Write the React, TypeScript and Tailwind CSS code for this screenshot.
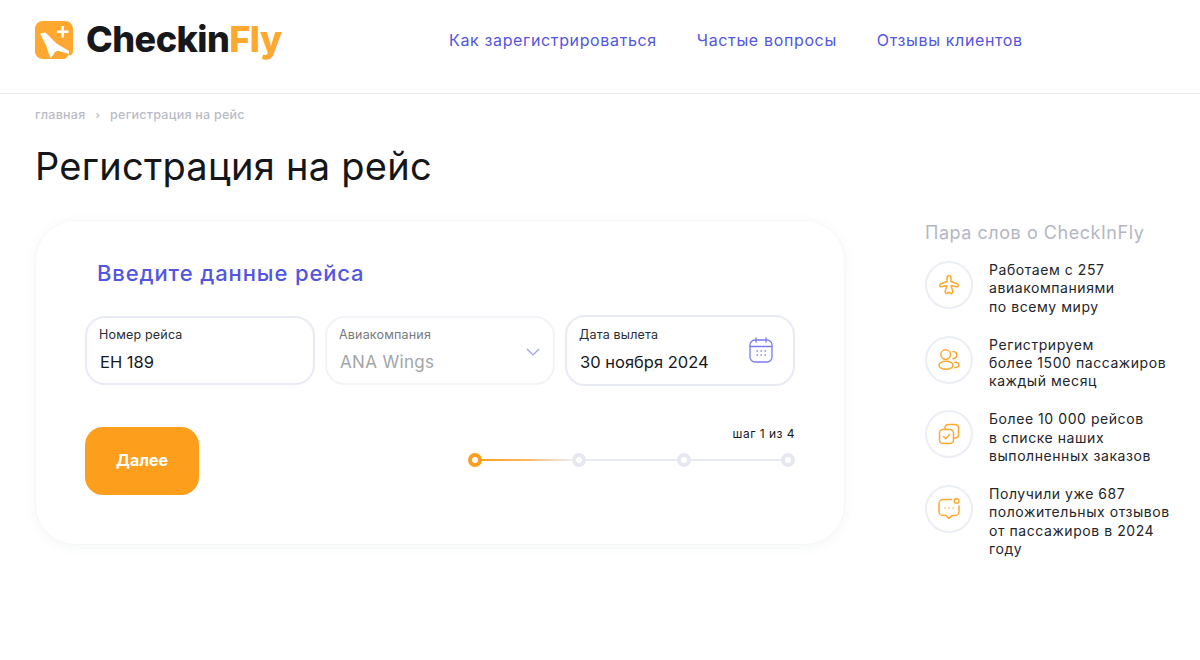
const font = "font-['Inter','Noto_Sans',sans-serif]";

function LogoMark() {
  return (
    <svg width="38" height="38" viewBox="0 0 38 38" className="shrink-0">
      <path d="M8 0H30C34.500 0 38 3.500 38 8V30C38 32 37 33.500 36 34L33 34.500L31 37.500L29 38H8C3.500 38 0 34.500 0 30V8C0 3.500 3.500 0 8 0Z" fill="#fea82f" />
      <path d="M5 12.500L10.500 11.500L21.500 22.500L34 30L34 33L23 29.700L19.700 31.300L16.500 36.500H15L11.300 25Z" fill="#fff" />
      <path d="M26.500 5H29V9.500H33.500V12H29V16.500H26.500V12H22V9.500H26.500Z" fill="#fff" />
    </svg>
  );
}

function PlaneIcon() {
  return (
    <svg width="22" height="22" viewBox="0 0 22 22" fill="none" stroke="#fea82f" strokeWidth="1.500" strokeLinejoin="round">
      <path d="M11 1.500C12.400 1.500 13 3 13 4.500V7.500L19 9.700C20.600 10.300 20.800 13 19 12.800L13 11.800L14.500 16C15.500 18.600 14 20 12.500 19.300L11 18.200L9.500 19.300C8 20 6.500 18.600 7.500 16L9 11.800L3 12.800C1.200 13 1.400 10.300 3 9.700L9 7.500V4.500C9 3 9.600 1.500 11 1.500Z" />
    </svg>
  );
}

function UsersIcon() {
  return (
    <svg width="22" height="22" viewBox="0 0 22 22" fill="none" stroke="#fea82f" strokeWidth="1.500" strokeLinecap="round">
      <circle cx="7.700" cy="5.600" r="4.800" />
      <ellipse cx="8" cy="16.300" rx="7" ry="4" />
      <path d="M15 2.500C17.500 2.800 18.800 4.500 18.800 6C18.800 7.500 17.500 9.300 15 9.700" />
      <path d="M16.800 13.300C19.800 13.500 21 14.800 21 16C21 17.200 19.800 18.400 16.800 18.700" />
    </svg>
  );
}

function ChecksIcon() {
  return (
    <svg width="22" height="22" viewBox="0 0 22 22" fill="none" stroke="#fea82f" strokeWidth="1.500" strokeLinecap="round" strokeLinejoin="round">
      <path d="M7 6.500V5C7 2.800 8.300 1.500 10.500 1.500H17C19.200 1.500 20.500 2.800 20.500 5V11.500C20.500 13.700 19.200 15 17 15H15.500" />
      <rect x="1.500" y="6.500" width="14" height="14" rx="3.500" />
      <path d="M5.500 13.500L7.700 15.700L11.500 11.500" />
    </svg>
  );
}

function ChatIcon() {
  return (
    <svg width="22" height="22" viewBox="0 0 22 22" fill="none" stroke="#fea82f" strokeWidth="1.500" strokeLinecap="round" strokeLinejoin="round">
      <path d="M13.500 1.500H5C2.800 1.500 1 3.300 1 5.500V13.500C1 15.700 2.800 17.500 5 17.500H8L11 20.500L14 17.500H17C19.200 17.500 21 15.700 21 13.500V8" />
      <circle cx="18.500" cy="3" r="2.300" />
      <path d="M7 10H7.010M11 10H11.010M15 10H15.010" />
    </svg>
  );
}

function CalendarIcon() {
  return (
    <svg width="24" height="26" viewBox="0 0 24 26" fill="none" stroke="#7b7bf0" strokeWidth="1.300" strokeLinecap="round">
      <rect x="1" y="3" width="22" height="22" rx="5" />
      <path d="M1 9.500H23M7 1V5M17 1V5" />
      <path d="M8 14H8.500M12 14H12.500M16 14H16.500M8 18H8.500M12 18H12.500M16 18H16.500" />
    </svg>
  );
}

function Field({ label, value, muted, size = 'h-[69px]', children }: any) {
  return (
    <div className={`relative flex-1 ${size} rounded-[20px] border-2 pl-[12px] pb-[2px] flex flex-col justify-center ${muted ? 'border-[#f3f4f8]' : 'border-[#e9ebf4]'}`}>
      <div className={`text-[12.500px] leading-[18px] tracking-[0.015em] ${muted ? 'text-[#777a80]' : 'text-[#2a2c33]'}`}>{label}</div>
      <div className={`mt-[7px] ml-[1px] leading-[22px] ${muted ? 'text-[17px] tracking-[0.02em] text-[#a3a5aa]' : 'text-[16.500px] text-[#17181c]'}`}>{value}</div>
      {children}
    </div>
  );
}

function Step({ active }: any) {
  return active ? (
    <div className="w-[14px] h-[14px] rounded-full border-[4px] border-[#fd9f1c] bg-white shrink-0" />
  ) : (
    <div className="w-[14px] h-[14px] rounded-full border-[4px] border-[#e6e8f1] bg-white shrink-0" />
  );
}

const facts = [
  { icon: <PlaneIcon />, lines: ['Работаем с 257', 'авиакомпаниями', 'по всему миру'] },
  { icon: <UsersIcon />, lines: ['Регистрируем', 'более 1500 пассажиров', 'каждый месяц'] },
  { icon: <ChecksIcon />, lines: ['Более 10 000 рейсов', 'в списке наших', 'выполненных заказов'] },
  { icon: <ChatIcon />, lines: ['Получили уже 687', 'положительных отзывов', 'от пассажиров в 2024', 'году'] },
];

export default function App() {
  return (
    <div className={`min-h-[660px] bg-white text-[#17181c] overflow-hidden ${font}`}>
      {/* Header */}
      <header className="h-[94px] border-b border-[#e9ebf2] flex items-start pl-[35px] pt-[21px]">
        <LogoMark />
        <div className="ml-[13px] w-[197px] text-[36px] leading-[36px] font-extrabold tracking-[-0.015em] whitespace-nowrap">
          Checkin<span className="text-[#fea82f]">Fly</span>
        </div>
        <nav className="ml-[166px] pt-[8px] flex gap-[40px] text-[16px] leading-[22px] tracking-[0.04em] text-[#5356e0] whitespace-nowrap">
          <a>Как зарегистрироваться</a>
          <a>Частые вопросы</a>
          <a>Отзывы клиентов</a>
        </nav>
      </header>

      <main className="px-[35px]">
        <div className="pt-[13px] flex items-center text-[12.500px] leading-[16px] tracking-[0.02em] font-medium text-[#b9bcc6]">
          <span>главная</span>
          <span className="mx-[10px] text-[11px]">›</span>
          <span>регистрация на рейс</span>
        </div>
        <h1 className="mt-[20px] text-[38px] leading-[46px] tracking-[0.007em] font-normal text-[#15161a]">Регистрация на рейс</h1>

        <div className="mt-[31px] flex items-start">
          {/* Flight form */}
          <section className="w-[810px] h-[325px] shrink-0 rounded-[40px] bg-white border border-[#f6f7f9] shadow-[0_2px_12px_rgba(60,70,110,0.05)] px-[49px] pt-[38px]">
            <h2 className="ml-[12px] text-[22px] leading-[28px] tracking-[0.04em] font-medium text-[#5356e0]">Введите данные рейса</h2>
            <div className="mt-[28px] h-[71px] flex items-center gap-[10px]">
              <Field label="Номер рейса" value="EH 189" />
              <Field label="Авиакомпания" value="ANA Wings" muted>
                <svg width="14" height="8" viewBox="0 0 14 8" fill="none" stroke="#9a9df0" strokeWidth="1.200" className="absolute right-[13px] top-[30px]">
                  <path d="M1 1L7 7L13 1" />
                </svg>
              </Field>
              <Field label="Дата вылета" value="30 ноября 2024" size="h-[71px]">
                <div className="absolute right-[20px] top-[20px]">
                  <CalendarIcon />
                </div>
              </Field>
            </div>

            <div className="mt-[41px] flex items-start justify-between">
              <button className="w-[114px] h-[68px] pb-[2px] rounded-[18px] bg-[#fd9f1c] text-white text-[16px] font-bold">Далее</button>
              <div className="w-[327px]">
                <div className="text-right text-[12px] leading-[14px] tracking-[0.04em] text-[#17181c]">шаг 1 из 4</div>
                <div className="mt-[12px] flex items-center">
                  <Step active />
                  <div className="flex-1 h-[2px] bg-gradient-to-r from-[#fd9f1c] via-[#fdb95c] to-[#e9ebf4]" />
                  <Step />
                  <div className="flex-1 h-[2px] bg-[#e9ebf4]" />
                  <Step />
                  <div className="flex-1 h-[2px] bg-[#e9ebf4]" />
                  <Step />
                </div>
              </div>
            </div>
          </section>

          {/* About */}
          <aside className="ml-[80px] w-[270px] shrink-0 pt-[1px]">
            <div className="text-[18px] leading-[24px] tracking-[0.03em] text-[#b4b7c3] whitespace-nowrap">Пара слов о CheckInFly</div>
            <div className="mt-[16px] flex flex-col">
              {facts.map((f, i) => (
                <div key={i} className="flex h-[74.700px] gap-[16px]">
                  <div className="w-[48px] h-[48px] rounded-full border-2 border-[#eceef5] flex items-center justify-center shrink-0">{f.icon}</div>
                  <div className="text-[14px] leading-[18.300px] tracking-[0.04em] text-[#23252b] whitespace-nowrap">
                    {f.lines.map((l, j) => (
                      <div key={j}>{l}</div>
                    ))}
                  </div>
                </div>
              ))}
            </div>
          </aside>
        </div>
      </main>
    </div>
  );
}
